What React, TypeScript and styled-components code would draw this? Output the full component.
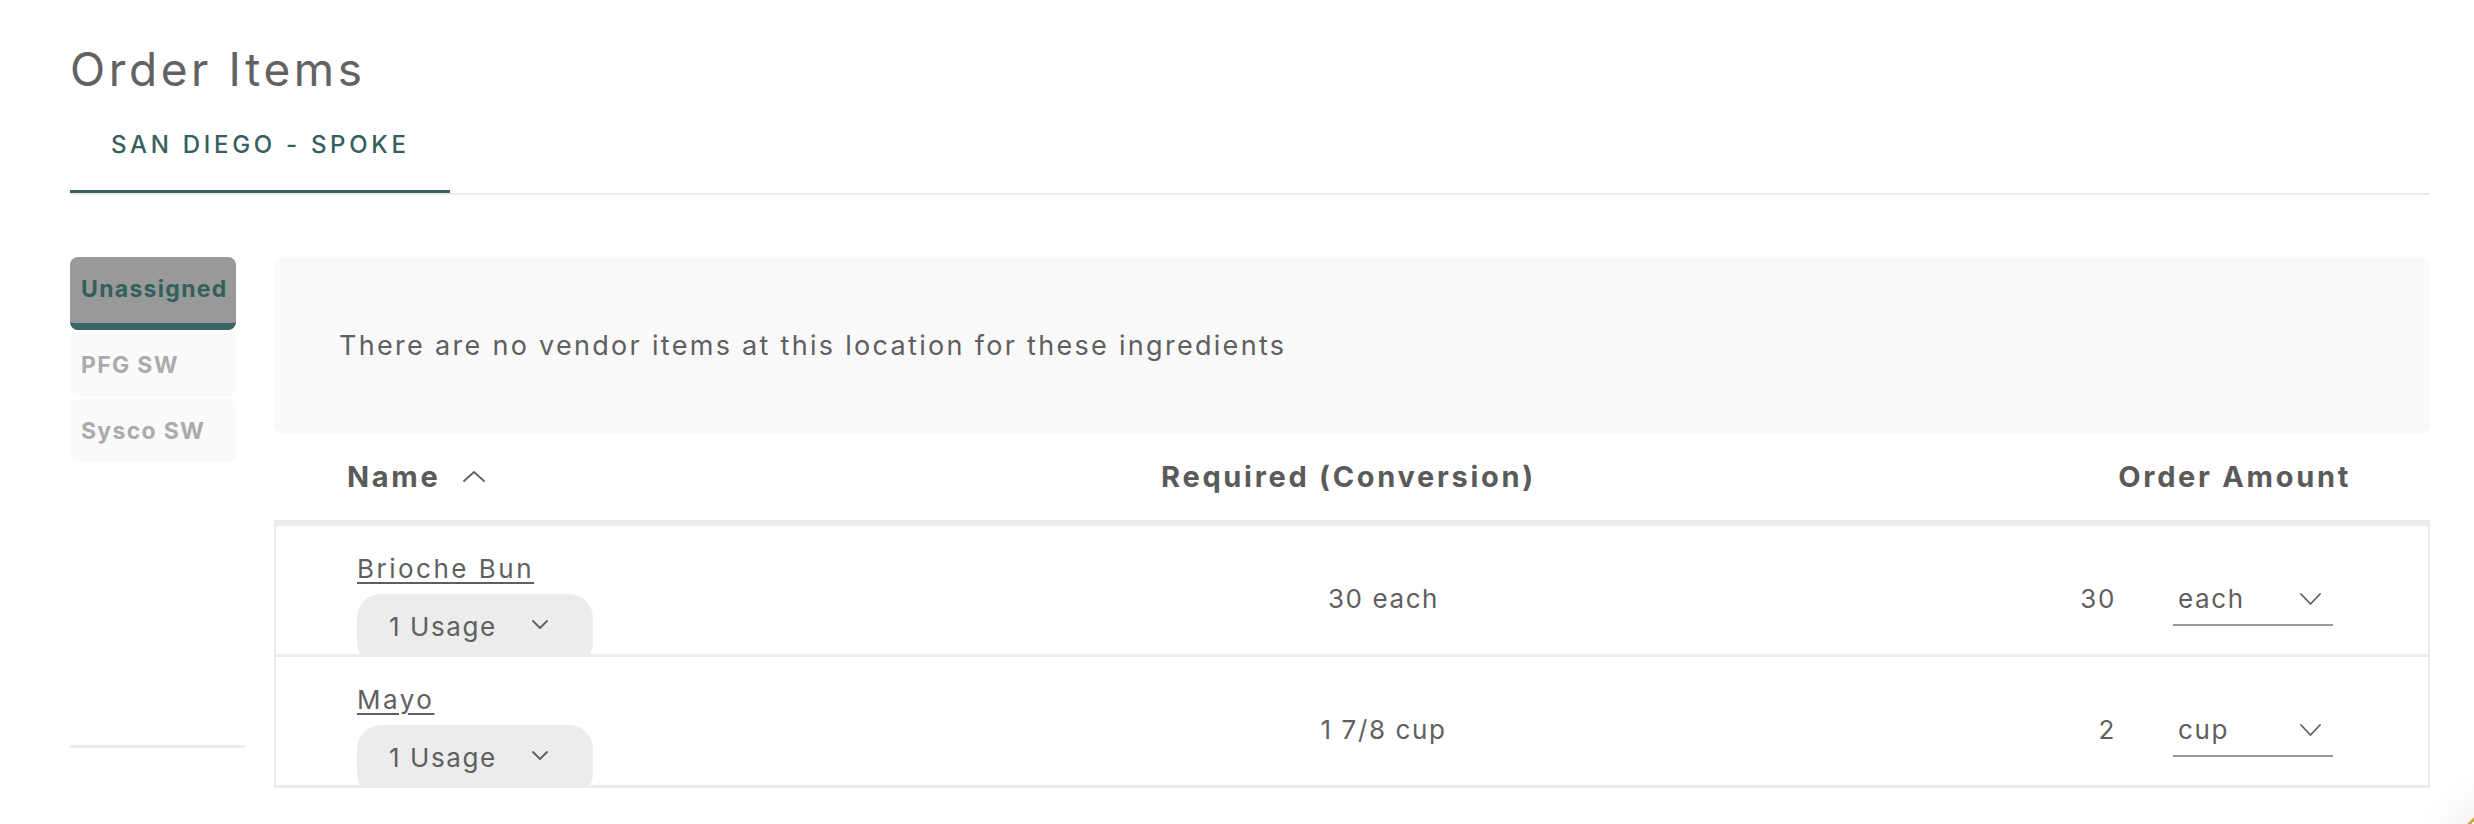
import React from "react";
import styled, { createGlobalStyle } from "styled-components";

const GlobalStyle = createGlobalStyle`
  html, body { margin: 0; padding: 0; background: #ffffff; }
  body {
    font-family: Inter, "Open Sans", "Liberation Sans", sans-serif;
    color: #606060;
    overflow: hidden;
  }
  * { box-sizing: border-box; }
`;

const Page = styled.div`
  padding: 42px 44px 0 70px;
  min-height: 824px;
`;

const Title = styled.h1`
  margin: 0;
  font-size: 46px;
  line-height: 54px;
  font-weight: 400;
  letter-spacing: 3.6px;
  color: #626262;
`;

const TabBar = styled.div`
  display: flex;
  border-bottom: 2px solid #ebebeb;
`;

const Tab = styled.div<{ $active?: boolean }>`
  padding: 34px 40px 30px 41px;
  border-bottom: 3px solid ${(p) => (p.$active ? "#3a6461" : "transparent")};
  font-size: 24px;
  line-height: 30px;
  font-weight: 500;
  letter-spacing: 3.7px;
  color: #35605d;
  white-space: nowrap;
`;

const Main = styled.div`
  display: flex;
  gap: 29px;
  margin-top: 62px;
`;

const Sidebar = styled.div`
  width: 175px;
  flex-shrink: 0;
  display: flex;
  flex-direction: column;
  padding-bottom: 40px;
`;

const VendorList = styled.div`
  display: flex;
  flex-direction: column;
  gap: 3px;
`;

const VendorButton = styled.div<{ $active?: boolean }>`
  width: 166px;
  height: ${(p) => (p.$active ? "73px" : "63px")};
  border-radius: 8px;
  padding: 18px 11px 0;
  font-size: 23px;
  line-height: 28px;
  font-weight: 700;
  letter-spacing: 1.3px;
  background: ${(p) => (p.$active ? "#999999" : "#fafafa")};
  color: ${(p) => (p.$active ? "#33605c" : "#ababab")};
  border-bottom: ${(p) => (p.$active ? "7px solid #3b6562" : "none")};
  white-space: nowrap;
`;

const SidebarRule = styled.div`
  margin-top: auto;
  height: 3px;
  width: 175px;
  background: #ececec;
`;

const Content = styled.div`
  flex: 1;
  display: flex;
  flex-direction: column;
`;

const EmptyNotice = styled.div`
  height: 176px;
  background: #f9f9f9;
  border-radius: 8px;
  display: flex;
  align-items: center;
  padding-left: 65px;
  font-size: 27px;
  letter-spacing: 2.3px;
  color: #5f5f5f;
`;

const HeaderRow = styled.div`
  display: grid;
  grid-template-columns: 1fr 1fr 1fr;
  align-items: center;
  height: 93px;
  border-bottom: 6px solid #ebecf0;
  font-size: 29px;
  line-height: 34px;
  font-weight: 700;
  letter-spacing: 2.7px;
  color: #5a5a5a;
`;

const HeaderCell = styled.div<{ $align: "left" | "center" | "right" }>`
  display: flex;
  align-items: center;
  gap: 23px;
  justify-content: ${(p) =>
    p.$align === "left" ? "flex-start" : p.$align === "center" ? "center" : "flex-end"};
  padding-left: ${(p) => (p.$align === "left" ? "73px" : "0")};
  padding-right: ${(p) => (p.$align === "right" ? "79px" : p.$align === "center" ? "7px" : "0")};
  white-space: nowrap;
`;

const Body = styled.div`
  border-left: 2px solid #ebecf0;
  border-right: 2px solid #ebecf0;
`;

const Row = styled.div`
  display: grid;
  grid-template-columns: 1fr 1fr 1fr;
  height: 131px;
  border-bottom: 3px solid #ebecf0;
  overflow: hidden;
  font-size: 26px;
  line-height: 30px;
  letter-spacing: 1.6px;
  color: #5f5f5f;
`;

const NameCell = styled.div`
  display: flex;
  flex-direction: column;
  align-items: flex-start;
  padding: 28px 0 0 81px;
`;

const NameLink = styled.a`
  color: #5f5f5f;
  text-decoration: underline;
  text-decoration-thickness: 2px;
  text-underline-offset: 4px;
  letter-spacing: 2.5px;
  cursor: pointer;
`;

const UsagePill = styled.div`
  margin-top: 10px;
  width: 236px;
  height: 72px;
  flex-shrink: 0;
  border-radius: 24px;
  background: #ececec;
  padding: 18px 32px 0;
  display: flex;
  align-items: flex-start;
  gap: 35px;
  letter-spacing: 1.6px;
`;

const PillText = styled.span`
  display: flex;
  align-items: center;
  height: 30px;
`;

const PillIcon = styled.span`
  display: flex;
  align-items: center;
  height: 30px;
  margin-top: -3px;
`;

const RequiredCell = styled.div`
  text-align: center;
  padding: 58px 0 0 63px;
  white-space: nowrap;
`;

const AmountCell = styled.div`
  display: flex;
  justify-content: flex-end;
  align-items: flex-start;
  gap: 57px;
  padding: 58px 95px 0 0;
`;

const AmountValue = styled.span`
  line-height: 30px;
`;

const UnitSelect = styled.div`
  width: 160px;
  height: 42px;
  border-bottom: 2px solid #9a9a9a;
  display: flex;
  justify-content: space-between;
  align-items: flex-start;
  padding: 0 12px 0 5px;
`;

const SelectIcon = styled.span`
  display: flex;
  align-items: center;
  height: 30px;
`;

const CornerWidget = styled.div`
  position: fixed;
  right: -116px;
  bottom: -116px;
  width: 140px;
  height: 140px;
  border-radius: 50%;
  background: #ffffff;
  border: 3px solid #d3a634;
  box-shadow: 0 0 50px rgba(0, 0, 0, 0.1);
`;

const Chevron = ({ w, h, up }: { w: number; h: number; up?: boolean }) => (
  <svg width={w} height={h} viewBox={`0 0 ${w} ${h}`} fill="none">
    <polyline
      points={up ? `1,${h - 1} ${w / 2},1 ${w - 1},${h - 1}` : `1,1 ${w / 2},${h - 1} ${w - 1},1`}
      stroke="#5f5f5f"
      strokeWidth={1.8}
      strokeLinecap="round"
      strokeLinejoin="round"
    />
  </svg>
);

const items = [
  { name: "Brioche Bun", required: "30 each", amount: "30", unit: "each" },
  { name: "Mayo", required: "1 7/8 cup", amount: "2", unit: "cup" },
];

const vendors = ["Unassigned", "PFG SW", "Sysco SW"];

export default function App() {
  return (
    <>
      <GlobalStyle />
      <Page>
        <Title>Order Items</Title>
        <TabBar>
          <Tab $active>SAN DIEGO - SPOKE</Tab>
        </TabBar>
        <Main>
          <Sidebar>
            <VendorList>
              {vendors.map((v, i) => (
                <VendorButton key={v} $active={i === 0}>
                  {v}
                </VendorButton>
              ))}
            </VendorList>
            <SidebarRule />
          </Sidebar>
          <Content>
            <EmptyNotice>There are no vendor items at this location for these ingredients</EmptyNotice>
            <HeaderRow>
              <HeaderCell $align="left">
                Name
                <Chevron w={22} h={11} up />
              </HeaderCell>
              <HeaderCell $align="center">Required (Conversion)</HeaderCell>
              <HeaderCell $align="right">Order Amount</HeaderCell>
            </HeaderRow>
            <Body>
              {items.map((it) => (
                <Row key={it.name}>
                  <NameCell>
                    <NameLink>{it.name}</NameLink>
                    <UsagePill>
                      <PillText>1 Usage</PillText>
                      <PillIcon>
                        <Chevron w={16} h={9} />
                      </PillIcon>
                    </UsagePill>
                  </NameCell>
                  <RequiredCell>{it.required}</RequiredCell>
                  <AmountCell>
                    <AmountValue>{it.amount}</AmountValue>
                    <UnitSelect>
                      <span>{it.unit}</span>
                      <SelectIcon>
                        <Chevron w={21} h={12} />
                      </SelectIcon>
                    </UnitSelect>
                  </AmountCell>
                </Row>
              ))}
            </Body>
          </Content>
        </Main>
        <CornerWidget />
      </Page>
    </>
  );
}
